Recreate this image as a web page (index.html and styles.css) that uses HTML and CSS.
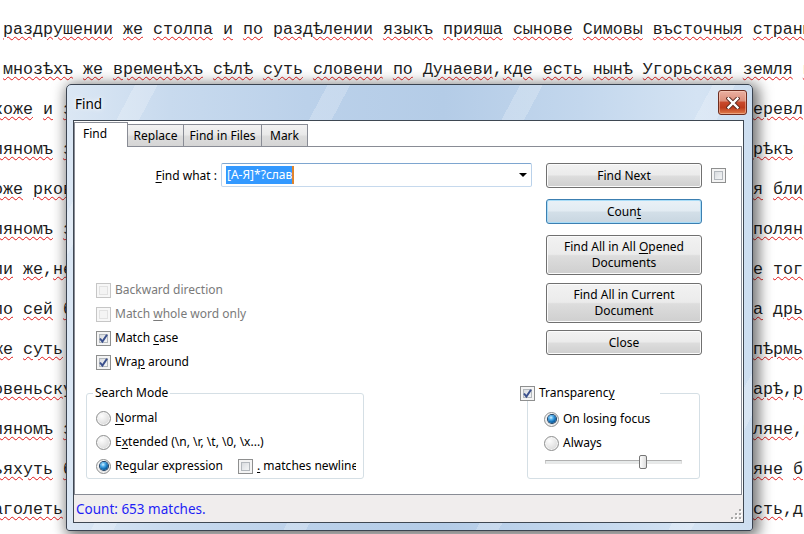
FILE: index.html
```html
<!DOCTYPE html>
<html lang="ru">
<head>
<meta charset="utf-8">
<title>Find</title>
<link rel="stylesheet" href="styles.css">
</head>
<body>
<div class="doc">
<div class="ln"> <span class="w">раздрушении</span> <span class="w">же</span> <span class="w">столпа</span> <span class="w">и</span> <span class="w">по</span> <span class="w">раздѣлении</span> <span class="w">языкъ</span> <span class="w">прияша</span> <span class="w">сынове</span> <span class="w">Симовы</span> <span class="w">въсточныя</span> <span class="w">страны</span></div>
<div class="ln"> <span class="w">мнозѣхъ</span> <span class="w">же</span> <span class="w">временѣхъ</span> <span class="w">сѣлѣ</span> <span class="w">суть</span> <span class="w">словени</span> <span class="w">по</span> <span class="w">Дунаеви</span>,<span class="w">кде</span> <span class="w">есть</span> <span class="w">нынѣ</span> <span class="w">Угорьская</span> <span class="w">земля</span> <span class="w">и</span></div>
<div class="ln split"><span><span class="w">коже</span> <span class="w">и</span> <span class="w">з</span></span><span><span class="w">еревл</span></span></div>
<div class="ln split"><span><span class="w">ляномъ</span> <span class="w">з</span></span><span><span class="w">рѣкъ</span> и</span></div>
<div class="ln split"><span><span class="w">оже</span> <span class="w">рков</span></span><span><span class="w">я</span> <span class="w">бли</span></span></div>
<div class="ln split"><span><span class="w">ляномъ</span> <span class="w">з</span></span><span><span class="w">полян</span></span></div>
<div class="ln split"><span><span class="w">ли</span> <span class="w">же</span>,<span class="w">не</span></span><span><span class="w">е</span> <span class="w">тог</span></span></div>
<div class="ln split"><span><span class="w">по</span> <span class="w">сей</span> <span class="w">б</span></span><span><span class="w">а</span> <span class="w">дрь</span></span></div>
<div class="ln split"><span><span class="w">же</span> <span class="w">суть</span> </span><span><span class="w">пѣрмь</span></span></div>
<div class="ln split"><span><span class="w">овеньску</span></span><span><span class="w">арѣ</span>,<span class="w">р</span></span></div>
<div class="ln split"><span><span class="w">ляномъ</span> <span class="w">з</span></span><span><span class="w">ляне</span>,и</span></div>
<div class="ln split"><span><span class="w">ьяхуть</span> <span class="w">б</span></span><span><span class="w">яне</span> <span class="w">б</span></span></div>
<div class="ln split"><span><span class="w">аголеть</span> </span><span><span class="w">сть</span>,<span class="w">д</span></span></div>
</div>

<div class="window">
  <div class="titlebar">
    <span class="title">Find</span>
    <span class="close">
      <svg width="14" height="12" viewBox="0 0 14 12"><path d="M2.5 1.5 L11.5 10.5 M11.5 1.5 L2.5 10.5" stroke="#5a2a20" stroke-width="4.2" stroke-linecap="square" fill="none"/><path d="M2.5 1.5 L11.5 10.5 M11.5 1.5 L2.5 10.5" stroke="#ffffff" stroke-width="2.4" stroke-linecap="square" fill="none"/></svg>
    </span>
  </div>
  <div class="client">
    <div class="tabs">
      <div class="tab active">Find</div>
      <div class="tab t-replace">Replace</div>
      <div class="tab t-files">Find in Files</div>
      <div class="tab t-mark">Mark</div>
    </div>
    <div class="panel">
      <div class="col-left">
        <div class="find-row">
          <label class="find-label"><u>F</u>ind what :</label>
          <div class="combo">
            <span class="sel">[А-Я]*?слав</span>
            <span class="arrow"></span>
          </div>
        </div>
        <div class="checks">
          <div class="opt disabled"><span class="cb"></span><span>Backward direction</span></div>
          <div class="opt disabled"><span class="cb"></span><span>Match <u>w</u>hole word only</span></div>
          <div class="opt"><span class="cb checked"><svg width="13" height="13" viewBox="0 0 13 13"><path d="M3 6.5 L5.4 9.5 L10 2.8" stroke="#3a4f8c" stroke-width="2" fill="none"/></svg></span><span>Match <u>c</u>ase</span></div>
          <div class="opt"><span class="cb checked"><svg width="13" height="13" viewBox="0 0 13 13"><path d="M3 6.5 L5.4 9.5 L10 2.8" stroke="#3a4f8c" stroke-width="2" fill="none"/></svg></span><span>Wra<u>p</u> around</span></div>
        </div>
      </div>
      <div class="col-right">
        <div class="btn-row">
          <div class="btn b-next"><span>Find Next</span></div>
          <span class="cb side"></span>
        </div>
        <div class="btn default b-count"><span>Coun<u>t</u></span></div>
        <div class="btn tall b-all"><span>Find All in All <u>O</u>pened<br>Documents</span></div>
        <div class="btn tall b-cur"><span>Find All in Current<br>Document</span></div>
        <div class="btn b-close"><span>Close</span></div>
      </div>
      <fieldset class="grp g-search">
        <legend>Search Mode</legend>
        <div class="opt"><span class="rb"></span><span><u>N</u>ormal</span></div>
        <div class="opt"><span class="rb"></span><span>E<u>x</u>tended (\n, \r, \t, \0, \x...)</span></div>
        <div class="opt">
          <span class="opt-fixed"><span class="rb on"></span><span>Re<u>g</u>ular expression</span></span>
          <span class="cb"></span><span class="clip"><u>.</u> matches newline</span>
        </div>
      </fieldset>
      <fieldset class="grp g-transp">
        <legend><span class="opt leg"><span class="cb checked"><svg width="13" height="13" viewBox="0 0 13 13"><path d="M3 6.5 L5.4 9.5 L10 2.8" stroke="#3a4f8c" stroke-width="2" fill="none"/></svg></span><span>Transparenc<u>y</u></span></span></legend>
        <div class="opt"><span class="rb on"></span><span>On losing focus</span></div>
        <div class="opt"><span class="rb"></span><span>Always</span></div>
        <div class="slider"><span class="track"></span><span class="thumb"></span></div>
      </fieldset>
    </div>
    <div class="status">
      <span class="status-text">Count: 653 matches.</span>
      <svg class="grip" width="12" height="12" viewBox="0 0 12 12">
        <g fill="#ffffff"><rect x="10" y="2" width="2" height="2"/><rect x="6" y="6" width="2" height="2"/><rect x="10" y="6" width="2" height="2"/><rect x="2" y="10" width="2" height="2"/><rect x="6" y="10" width="2" height="2"/><rect x="10" y="10" width="2" height="2"/></g>
        <g fill="#a8a8a8"><rect x="9" y="1" width="2" height="2"/><rect x="5" y="5" width="2" height="2"/><rect x="9" y="5" width="2" height="2"/><rect x="1" y="9" width="2" height="2"/><rect x="5" y="9" width="2" height="2"/><rect x="9" y="9" width="2" height="2"/></g>
      </svg>
    </div>
  </div>
</div>
</body>
</html>
```

FILE: styles.css
```css
html, body {
  margin: 0;
  padding: 0;
  background: #fff;
  overflow: hidden;
}
body {
  width: 804px;
  height: 534px;
  position: relative;
}

/* ---------- background document ---------- */
.doc {
  padding-top: 10px;
  font-family: "Liberation Mono", "DejaVu Sans Mono", monospace;
  font-size: 16.667px;
  line-height: 40px;
  color: #1c1c1c;
}
.ln {
  white-space: pre;
  margin-left: -7px;
  height: 40px;
}
.ln.split {
  display: grid;
  grid-template-columns: 760px auto;
}
.w {
  text-decoration: underline wavy #e01818;
  text-decoration-thickness: 1px;
  text-underline-offset: 2px;
}

/* ---------- window ---------- */
.window {
  position: absolute;
  left: 66px;
  top: 84px;
  width: 687px;
  height: 447px;
  box-sizing: border-box;
  border: 1px solid #3a4350;
  border-radius: 5px 5px 3px 3px;
  padding: 0 8px 7px 6px;
  display: flex;
  flex-direction: column;
  background:
    repeating-linear-gradient(118deg, rgba(255,255,255,0) 0 60px, rgba(255,255,255,0.22) 60px 80px, rgba(255,255,255,0) 80px 170px),
    linear-gradient(to right, #dbe7f4 0%, #c8daee 15%, #bbd1ea 35%, #b4cce7 55%, #c3d7ed 75%, #d4e3f3 92%, #cddef0 100%);
  box-shadow: 3px 3px 14px 3px rgba(0,0,0,0.55);
  font-family: "Noto Sans", "Open Sans", sans-serif;
  font-size: 12px;
  color: #000;
}
.titlebar {
  height: 35px;
  display: flex;
  align-items: flex-start;
  justify-content: space-between;
  flex: none;
}
.title {
  margin: 10px 0 0 2px;
  font-size: 13.5px;
  line-height: 18px;
  color: #000;
  text-shadow: 0 0 6px #fff, 0 0 3px #fff;
}
.close {
  margin: 5px -3px 0 0;
  width: 29px;
  height: 25px;
  box-sizing: border-box;
  border: 1px solid #6e2d20;
  border-radius: 3px;
  background: linear-gradient(#eab0a2 0%, #dd907c 42%, #c8492c 50%, #bd3c1d 72%, #e07c4a 100%);
  box-shadow: inset 0 0 0 1px rgba(255,220,200,0.45);
  display: flex;
  align-items: center;
  justify-content: center;
}

.client {
  flex: 1;
  border: 1px solid #3e4752;
  background: #fff;
  display: flex;
  flex-direction: column;
}

/* ---------- tabs ---------- */
.tabs {
  height: 25px;
  display: flex;
  align-items: flex-end;
  flex: none;
}
.tab {
  box-sizing: border-box;
  height: 22px;
  border: 1px solid #898c95;
  border-bottom: 0;
  background: linear-gradient(#f2f2f2 0%, #e9e9e9 45%, #dcdcdc 55%, #d5d5d5 100%);
  display: flex;
  align-items: center;
  justify-content: center;
  margin-left: -1px;
  line-height: 16px;
}
.tab.active {
  margin-left: 0;
  width: 54px;
  height: 25px;
  margin-bottom: -1px;
  background: #fff;
  position: relative;
  z-index: 1;
  justify-content: flex-start;
  padding: 0 0 2px 8px;
}
.t-replace { width: 57px; }
.t-files { width: 79px; }
.t-mark { width: 47px; }

.panel {
  box-sizing: border-box;
  height: 349px;
  margin-right: 1px;
  border: 1px solid #898c95;
  display: grid;
  grid-template-columns: 452px 214px;
  grid-template-rows: 238px 1fr;
}

/* ---------- left column ---------- */
.col-left {
  padding-top: 16px;
}
.find-row {
  display: flex;
  align-items: center;
  height: 24px;
}
.find-label {
  width: 142px;
  text-align: right;
  margin-right: 4px;
  flex: none;
}
.combo {
  flex: none;
  width: 311px;
  height: 24px;
  box-sizing: border-box;
  border: 1px solid;
  border-color: #7ea6d0 #b9d1ea #c6d9ed #b9d1ea;
  border-radius: 2px;
  background: #fff;
  display: flex;
  align-items: center;
  padding-left: 4px;
}
.sel {
  background: #3399ff;
  color: #fff;
  line-height: 18px;
  padding: 0 0 0 1px;
  border-right: 2px solid #e0842c;
}
.arrow {
  margin-left: auto;
  margin-right: 4px;
  width: 0;
  height: 0;
  border-left: 4px solid transparent;
  border-right: 4px solid transparent;
  border-top: 4px solid #000;
}
.checks {
  margin-top: 91px;
  padding-left: 21px;
}

.opt {
  display: flex;
  align-items: center;
  gap: 4px;
  height: 24px;
  line-height: 16px;
  white-space: nowrap;
}
.opt.disabled { color: #7a7a7a; }

.cb {
  flex: none;
  width: 15px;
  height: 15px;
  box-sizing: border-box;
  border: 1px solid #8e8f8f;
  background: linear-gradient(135deg, #cdd0d4 0%, #eceef0 60%, #fafafa 100%);
  box-shadow: inset 0 0 0 2px #f4f4f4, inset 0 0 0 3px #b3b8bd;
  display: flex;
  align-items: center;
  justify-content: center;
}
.cb svg { display: block; }
.disabled .cb {
  border-color: #c6c6c6;
  background: #f4f4f4;
  box-shadow: inset 0 0 0 2px #f7f7f7, inset 0 0 0 3px #e2e2e2;
}
.rb {
  flex: none;
  width: 15px;
  height: 15px;
  box-sizing: border-box;
  border-radius: 50%;
  border: 1px solid #8e8f8f;
  background: radial-gradient(circle at 35% 30%, #fdfdfd 0%, #e9e9e9 45%, #cfcfcf 100%);
  box-shadow: inset 0 0 0 1px #f6f6f6;
  display: flex;
  align-items: center;
  justify-content: center;
}
.rb.on::after {
  content: "";
  width: 8px;
  height: 8px;
  border-radius: 50%;
  background: radial-gradient(circle at 38% 32%, #d6f1ff 0%, #52b0ec 28%, #0f6bb2 60%, #0c3e6e 100%);
  box-shadow: 0 0 0 1px #1b3e63;
}

/* ---------- right column ---------- */
.col-right {
  padding: 16px 0 0 19px;
}
.btn-row {
  display: flex;
  align-items: center;
}
.btn {
  box-sizing: border-box;
  width: 156px;
  height: 25px;
  border: 1px solid #707070;
  border-radius: 3px;
  background: linear-gradient(#f2f2f2 0%, #ebebeb 48%, #dddddd 52%, #cfcfcf 100%);
  box-shadow: inset 0 0 0 1px #fbfbfb;
  display: flex;
  align-items: center;
  justify-content: center;
  text-align: center;
  line-height: 16px;
}
.btn.tall { height: 40px; }
.btn.default {
  border-color: #3c7fb1;
  background: linear-gradient(#e9f1f7 0%, #e2ebf2 48%, #d3dfe8 52%, #c8d6e1 100%);
  box-shadow: inset 0 0 0 1px #a8dcf7;
}
.cb.side { margin-left: 9px; }
.b-count { margin-top: 11px; }
.b-all { margin-top: 11px; }
.b-cur { margin-top: 8px; }
.b-close { margin-top: 7px; }

/* ---------- group boxes ---------- */
.grp {
  margin: 0;
  box-sizing: border-box;
  height: 94px;
  border: 1px solid #d5dfe5;
  border-radius: 3px;
  align-self: start;
}
.grp legend {
  line-height: 16px;
  padding: 0 2px;
}
.g-search {
  margin-left: 11px;
  width: 278px;
  padding: 5px 0 0 9px;
}
.g-search legend { margin-left: -3px; }
.opt-fixed {
  display: flex;
  align-items: center;
  gap: 4px;
  width: 138px;
}
.clip {
  width: 99px;
  overflow: hidden;
}
.g-transp {
  width: 173px;
  padding: 6px 0 0 16px;
}
.g-transp legend {
  margin-left: -24px;
  padding: 0;
  width: 140px;
  background: #fff;
}
.opt.leg { height: 16px; }
.slider {
  position: relative;
  margin-left: 1px;
  width: 137px;
  height: 14px;
  display: flex;
  align-items: center;
}
.track {
  display: block;
  width: 100%;
  height: 4px;
  box-sizing: border-box;
  border: 1px solid;
  border-color: #b0b0b0 #dcdcdc #e8e8e8 #c8c8c8;
  background: #e7eaea;
}
.thumb {
  position: absolute;
  left: 94px;
  top: 0;
  width: 8px;
  height: 14px;
  box-sizing: border-box;
  border: 1px solid #767676;
  border-radius: 2px;
  background: linear-gradient(90deg, #fdfdfd, #dedede);
}

/* ---------- status bar ---------- */
.status {
  flex: none;
  height: 27px;
  background: #f0eded;
  display: flex;
  align-items: center;
  justify-content: space-between;
  padding-left: 2px;
}
.status-text {
  color: #1f1ff5;
  font-size: 13.5px;
  line-height: 18px;
}
.grip {
  align-self: flex-end;
  margin: 0 1px 2px 0;
}
u { text-decoration-thickness: 1px; text-underline-offset: 2px; }
```
